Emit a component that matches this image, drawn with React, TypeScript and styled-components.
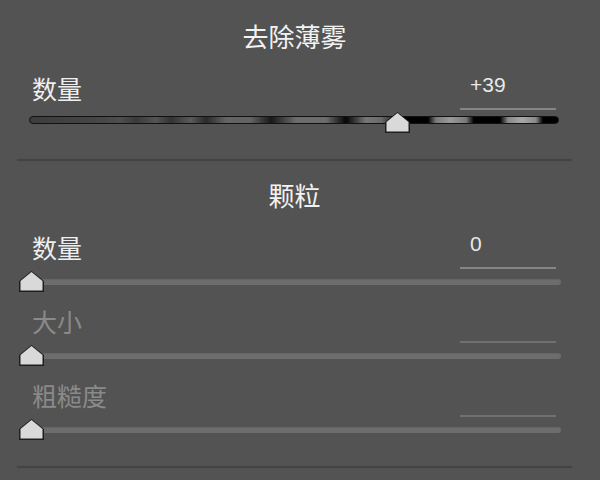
import React from "react";
import styled, { createGlobalStyle } from "styled-components";

const GlobalStyle = createGlobalStyle`
	html, body {
		margin: 0;
		padding: 0;
		background: #535353;
	}
	body {
		width: 600px;
		height: 480px;
		overflow: hidden;
		font-family: "Noto Sans CJK SC", "Noto Sans", sans-serif;
	}
`;

const Panel = styled.div`
	margin-left: 17px;
	width: 555px;
	display: flex;
	flex-direction: column;
`;

const Title = styled.div<{ $top: number }>`
	margin-top: ${(p) => p.$top}px;
	height: 48px;
	line-height: 48px;
	text-align: center;
	font-size: 26px;
	color: #f2f2f2;
`;

const SliderBlock = styled.div<{ $gap?: number }>`
	display: flex;
	flex-direction: column;
	margin-bottom: ${(p) => p.$gap ?? 0}px;
`;

const Header = styled.div`
	height: 50px;
	display: flex;
	align-items: flex-end;
	justify-content: space-between;
	padding: 0 16px 0 15px;
`;

const Label = styled.div<{ $disabled?: boolean }>`
	line-height: 30px;
	padding-bottom: 7px;
	font-size: 25px;
	color: ${(p) => (p.$disabled ? "#8a8a8a" : "#efefef")};
`;

const ValueBox = styled.div<{ $disabled?: boolean }>`
	width: 86px;
	height: 30px;
	line-height: 30px;
	padding: 0 0 8px 10px;
	border-bottom: 2px solid ${(p) => (p.$disabled ? "#6f6f6f" : "#858585")};
	font-family: "Liberation Sans", Arial, sans-serif;
	font-size: 21px;
	color: #e8e8e8;
`;

const Track = styled.div<{ $left: number; $width: number; $top: number }>`
	position: relative;
	margin-top: ${(p) => p.$top}px;
	margin-left: ${(p) => p.$left}px;
	width: ${(p) => p.$width}px;
`;

const DehazeBar = styled.div`
	height: 6px;
	border: 1px solid #111;
	border-radius: 4px;
	background: linear-gradient(
		to right,
		#3d3d3d 0px,
		#464646 71px,
		#4e4e4e 91px,
		#3a3a3a 106px,
		#555 126px,
		#333 141px,
		#5a5a5a 161px,
		#2a2a2a 176px,
		#636363 196px,
		#636363 221px,
		#181818 241px,
		#6c6c6c 266px,
		#6c6c6c 296px,
		#050505 316px,
		#777 336px,
		#6a6a6a 351px,
		#000 371px,
		#000 398px,
		#7a7a7a 406px,
		#999 420px,
		#7a7a7a 436px,
		#000 444px,
		#000 470px,
		#888 478px,
		#a8a8a8 492px,
		#888 506px,
		#000 513px,
		#000 530px
	);
`;

const PlainBar = styled.div`
	height: 6px;
	border-radius: 3px;
	background: #6d6d6d;
	box-shadow: inset 0 1px 0 #656565;
`;

const ThumbWrap = styled.div<{ $top: number }>`
	position: absolute;
	top: ${(p) => p.$top}px;
	width: 27px;
	height: 23px;
`;

const Divider = styled.div<{ $top: number }>`
	margin-top: ${(p) => p.$top}px;
	height: 2px;
	background: #444;
	box-shadow: 0 0 1px #474747;
`;

const Thumb = ({ left, top }: { left: number; top: number }) => (
	<ThumbWrap $top={top} style={{ left }}>
		<svg width="27" height="23" viewBox="0 0 27 23">
			<polygon points="13.5,1 26,11 26,22 1,22 1,11" fill="#1e1e1e" />
			<polygon points="13.5,2 24.5,11 24.5,20.5 2.5,20.5 2.5,11" fill="#d9d9d9" />
		</svg>
	</ThumbWrap>
);

interface ISliderProps {
	label: string;
	value?: string;
	disabled?: boolean;
	gap?: number;
}

const GrainSlider = ({ label, value, disabled, gap }: ISliderProps) => (
	<SliderBlock $gap={gap}>
		<Header>
			<Label $disabled={disabled}>{label}</Label>
			<ValueBox $disabled={disabled}>{value}</ValueBox>
		</Header>
		<Track $left={3} $width={541} $top={10}>
			<PlainBar />
			<Thumb left={-2} top={-9} />
		</Track>
	</SliderBlock>
);

const App = () => {
	const amount = 39;
	const frac = (amount + 100) / 200;
	return (
		<>
			<GlobalStyle />
			<Panel>
				<Title $top={12}>去除薄雾</Title>
				<SliderBlock>
					<Header>
						<Label>数量</Label>
						<ValueBox>+{amount}</ValueBox>
					</Header>
					<Track $left={12} $width={530} $top={6}>
						<DehazeBar />
						<Thumb left={frac * 530 - 13.5} top={-5} />
					</Track>
				</SliderBlock>
				<Divider $top={35} />

				<Title $top={10}>颗粒</Title>
				<GrainSlider label="数量" value="0" gap={8} />
				<GrainSlider label="大小" disabled gap={8} />
				<GrainSlider label="粗糙度" disabled />
				<Divider $top={33} />
			</Panel>
		</>
	);
};

export default App;
